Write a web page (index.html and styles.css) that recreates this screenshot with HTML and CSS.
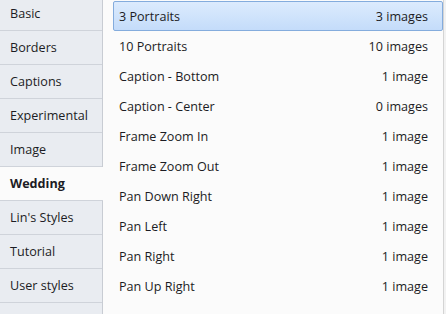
FILE: index.html
```html
<!DOCTYPE html>
<html lang="en">
<head>
  <meta charset="UTF-8">
  <title>Styles</title>
  <link rel="stylesheet" href="styles.css">
</head>
<body>

  <div class="tabs">
    <div class="tab">Basic</div>
    <div class="tab">Borders</div>
    <div class="tab">Captions</div>
    <div class="tab">Experimental</div>
    <div class="tab">Image</div>
    <div class="tab active">Wedding</div>
    <div class="tab">Lin's Styles</div>
    <div class="tab">Tutorial</div>
    <div class="tab">User styles</div>
  </div>

  <div class="list">
    <div class="row selected"><span>3 Portraits</span><span>3 images</span></div>
    <div class="row"><span>10 Portraits</span><span>10 images</span></div>
    <div class="row"><span>Caption - Bottom</span><span>1 image</span></div>
    <div class="row"><span>Caption - Center</span><span>0 images</span></div>
    <div class="row"><span>Frame Zoom In</span><span>1 image</span></div>
    <div class="row"><span>Frame Zoom Out</span><span>1 image</span></div>
    <div class="row"><span>Pan Down Right</span><span>1 image</span></div>
    <div class="row"><span>Pan Left</span><span>1 image</span></div>
    <div class="row"><span>Pan Right</span><span>1 image</span></div>
    <div class="row"><span>Pan Up Right</span><span>1 image</span></div>
  </div>

  <div class="scroll"></div>

</body>
</html>
```

FILE: styles.css
```css
body {
  margin: 0;
  height: 314px;
  overflow: hidden;
  display: flex;
  font-family: "Open Sans", "Noto Sans", sans-serif;
  font-size: 12.6px;
  color: #1c1c24;
  background: #fbfbfb;
}
.tabs {
  width: 102px;
  flex: none;
  margin-top: -3px;
  background: #e9ecf1;
  border-right: 1px solid #c8ccd3;
}
.tab {
  height: 33px;
  line-height: 33px;
  padding-left: 10px;
  border-bottom: 1px solid #cfd3da;
}
.tab.active {
  background: #fbfbfb;
  font-weight: bold;
  margin-right: -1px;
}
.list {
  flex: 1;
  padding: 1px 0 0 10px;
}
.row {
  height: 30px;
  box-sizing: border-box;
  display: flex;
  align-items: center;
  justify-content: space-between;
  padding: 0 14px 0 5px;
  border: 1px solid transparent;
  border-radius: 2px;
}
.row.selected {
  border-color: #84acdd;
  background: linear-gradient(#dcebfd, #c4dcfa);
}
.scroll {
  width: 2px;
  flex: none;
  border-left: 1px solid #d4d4d4;
  background: #f2f2f2;
}
```
